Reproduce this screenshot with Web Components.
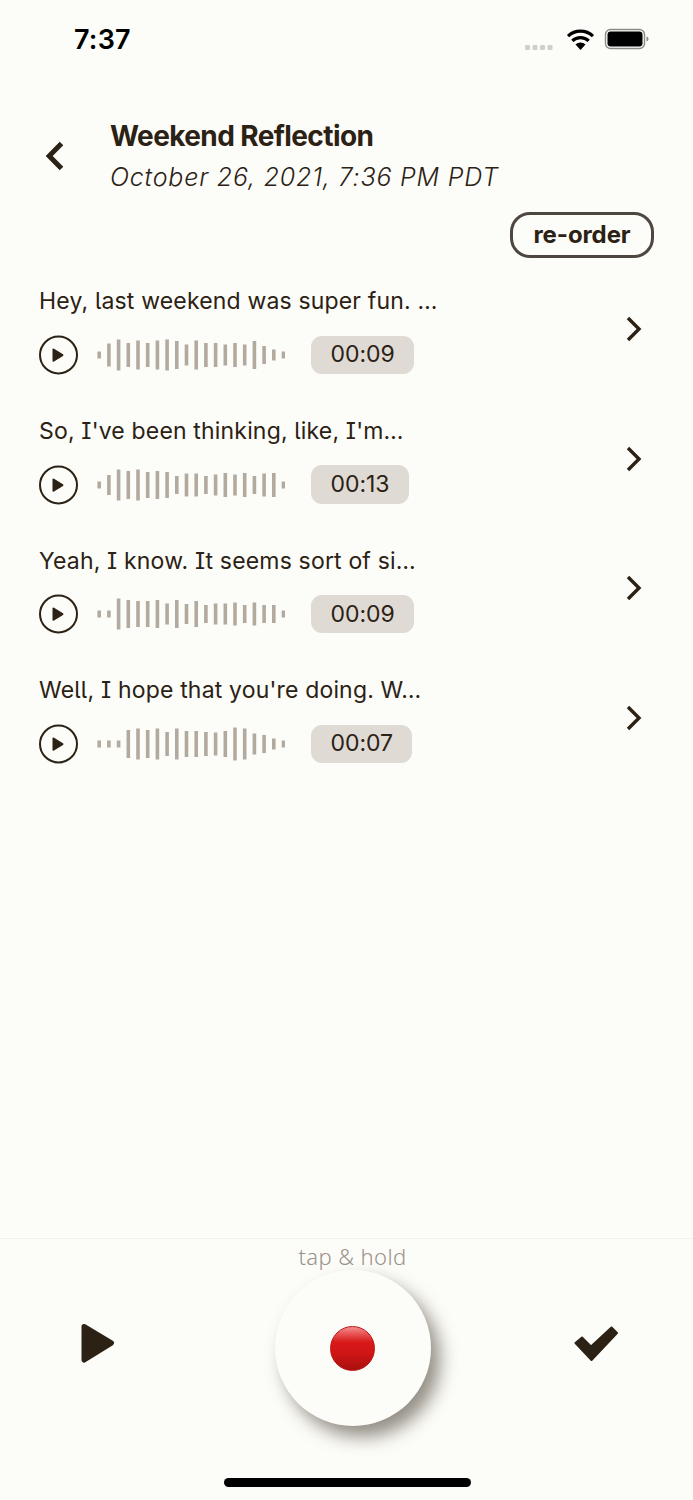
<!DOCTYPE html>
<html>
<head>
<meta charset="utf-8">
<style>
  html, body { margin: 0; padding: 0; background: #fcfcf8; }
  body { font-family: "Inter", "Liberation Sans", sans-serif; color: #2b2114; }
  app-screen { height: 1500px; }
</style>
</head>
<body>
<app-screen>
  <status-bar slot="status" time="7:37"></status-bar>
  <note-header slot="header" date="October 26, 2021, 7:36 PM PDT">Weekend Reflection</note-header>
  <clip-row time="00:09" bars="7,23,31,24,29,24,29,31,28,21,29,24,24,21,24,21,28,18,11,7">Hey, last weekend was super fun. …</clip-row>
  <clip-row time="00:13" bars="7,20,31,28,31,26,28,26,18,23,23,18,21,24,21,24,18,23,24,7">So, I've been thinking, like, I'm…</clip-row>
  <clip-row time="00:09" bars="7,7,31,28,26,26,28,21,28,20,26,18,21,21,23,18,23,18,18,7">Yeah, I know. It seems sort of si…</clip-row>
  <clip-row time="00:07" bars="7,7,7,28,31,28,31,24,31,26,26,24,23,26,33,31,21,18,11,7">Well, I hope that you're doing. W…</clip-row>
  <record-footer slot="footer"></record-footer>
</app-screen>

<script>
class AppScreen extends HTMLElement {
  constructor() {
    super();
    this.attachShadow({ mode: "open" }).innerHTML = `
      <style>
        :host { display: flex; flex-direction: column; width: 693px; overflow: hidden; }
        .list { flex: 1; display: flex; flex-direction: column; padding-top: 8px; }
      </style>
      <slot name="status"></slot>
      <slot name="header"></slot>
      <div class="list"><slot></slot></div>
      <slot name="footer"></slot>
    `;
  }
}
customElements.define("app-screen", AppScreen);

class StatusBar extends HTMLElement {
  constructor() {
    super();
    this.attachShadow({ mode: "open" }).innerHTML = `
      <style>
        :host { display: flex; align-items: flex-start; justify-content: space-between; height: 80px; box-sizing: border-box; padding: 24px 43px 0 74px; }
        .time { font: 600 27px/31px "Inter", "Liberation Sans", sans-serif; color: #000; letter-spacing: 0.2px; }
        .icons { display: flex; align-items: flex-start; padding-top: 4px; }
        svg { display: block; }
      </style>
      <div class="time"></div>
      <div class="icons">
        <svg width="126" height="26" viewBox="0 0 126 26">
          <g fill="#cfcfcb">
            <rect x="1" y="17" width="5" height="5" rx="1.2"/><rect x="8.5" y="17" width="5" height="5" rx="1.2"/>
            <rect x="16" y="17" width="5" height="5" rx="1.2"/><rect x="23.5" y="17" width="5" height="5" rx="1.2"/>
          </g>
          <g fill="none" stroke="#000" stroke-width="3.2">
            <path d="M44 8.2a18 18 0 0 1 25 0"/>
            <path d="M48.3 12.8a12 12 0 0 1 16.4 0"/>
          </g>
          <path d="M51.5 16.6a7 7 0 0 1 10 0L56.5 22z" fill="#000"/>
          <rect x="81.5" y="1.5" width="39" height="19" rx="5" fill="none" stroke="#8b8b88" stroke-width="1.4"/>
          <rect x="83.5" y="3.5" width="35" height="15" rx="3.2" fill="#000"/>
          <path d="M122.5 8.5c1.6.4 2 1.4 2 2.500s-.4 2.100-2 2.500z" fill="#8b8b88"/>
        </svg>
      </div>
    `;
    this.shadowRoot.querySelector(".time").textContent = this.getAttribute("time") || "";
  }
}
customElements.define("status-bar", StatusBar);

class NoteHeader extends HTMLElement {
  constructor() {
    super();
    this.attachShadow({ mode: "open" }).innerHTML = `
      <style>
        :host { display: block; padding: 39px 39px 0 45px; }
        .top { display: flex; align-items: flex-start; }
        .back { width: 65px; padding-top: 22px; flex: none; }
        svg { display: block; }
        h1 { margin: 0; font: 700 28px/34px "Inter", "Liberation Sans", sans-serif; letter-spacing: -0.6px; color: #2b2114; }
        .date { margin-top: 9px; font: italic 300 25px/30px "Inter", "Liberation Sans", sans-serif; letter-spacing: 0.81px; color: #2b2114; }
        .actions { display: flex; justify-content: flex-end; margin-top: 20px; }
        .pill { box-sizing: border-box; height: 46px; width: 144px; border: 3px solid #4d4740; border-radius: 20px; display: flex; align-items: center; justify-content: center; font: 700 24px/1 "Inter", "Liberation Sans", sans-serif; letter-spacing: -0.1px; color: #2b2114; }
      </style>
      <div class="top">
        <div class="back">
          <svg width="21" height="30" viewBox="0 0 21 30"><path d="M16.500 2.500 4.200 15l12.300 12.500" fill="none" stroke="#2b2114" stroke-width="5"/></svg>
        </div>
        <div>
          <h1><slot></slot></h1>
          <div class="date"></div>
        </div>
      </div>
      <div class="actions"><div class="pill">re-order</div></div>
    `;
    this.shadowRoot.querySelector(".date").textContent = this.getAttribute("date") || "";
  }
}
customElements.define("note-header", NoteHeader);

class WaveForm extends HTMLElement {
  static get observedAttributes() { return ["bars"]; }
  constructor() {
    super();
    this.attachShadow({ mode: "open" }).innerHTML = `
      <style>
        :host { display: block; width: 188px; height: 34px; }
        svg { display: block; }
      </style>
      <svg width="188" height="34" viewBox="0 0 188 34"></svg>
    `;
  }
  attributeChangedCallback() {
    const svg = this.shadowRoot.querySelector("svg");
    svg.innerHTML = "";
    (this.getAttribute("bars") || "").split(",").forEach((h, i) => {
      // bars are antialiased on purpose, they sit on a 9.7px pitch
      const bar = document.createElementNS("http://www.w3.org/2000/svg", "rect");
      bar.setAttribute("x", 0.4 + i * 9.7);
      bar.setAttribute("y", 17 - h / 2);
      bar.setAttribute("width", 3.6);
      bar.setAttribute("height", h);
      bar.setAttribute("fill", "#b3aa9f");
      svg.appendChild(bar);
    });
  }
}
customElements.define("wave-form", WaveForm);

class ClipRow extends HTMLElement {
  constructor() {
    super();
    this.attachShadow({ mode: "open" }).innerHTML = `
      <style>
        :host { display: flex; align-items: center; height: 129.700px; box-sizing: border-box; padding: 0 50px 0 39px; }
        .main { flex: 1; margin-top: -1px; }
        .text { font: 400 23px/30px "Inter", "Liberation Sans", sans-serif; font-feature-settings: "cv08", "cv05"; letter-spacing: 0.17px; color: #2b2114; margin-bottom: 19px; white-space: nowrap; }
        .player { display: flex; align-items: center; height: 39px; }
        .play { display: block; flex: none; margin-right: 18px; }
        .chip { margin-left: 26px; height: 38.500px; box-sizing: border-box; padding: 0 19.500px; display: flex; align-items: center; background: #dfdad4; border-radius: 11px; font: 400 23px/1 "Inter", "Liberation Sans", sans-serif; letter-spacing: -0.05px; color: #2b2114; }
        .arrow { display: block; flex: none; margin-top: -4px; }
      </style>
      <div class="main">
        <div class="text"><slot></slot></div>
        <div class="player">
          <svg class="play" width="40" height="40" viewBox="0 0 40 40">
            <circle cx="19.500" cy="20" r="18.500" fill="none" stroke="#2b2114" stroke-width="2"/>
            <path d="M13.500 14.500a1 1 0 0 1 1.500-.8l9 5.600a1 1 0 0 1 0 1.600l-9 5.600a1 1 0 0 1-1.500-.8z" fill="#2b2114"/>
          </svg>
          <wave-form></wave-form>
          <div class="chip"></div>
        </div>
      </div>
      <svg class="arrow" width="18" height="26" viewBox="0 0 18 26"><path d="M3 2l11 11L3 24" fill="none" stroke="#2b2114" stroke-width="3.400"/></svg>
    `;
    this.shadowRoot.querySelector(".chip").textContent = this.getAttribute("time") || "";
    this.shadowRoot.querySelector("wave-form").setAttribute("bars", this.getAttribute("bars") || "");
  }
}
customElements.define("clip-row", ClipRow);

class RecordFooter extends HTMLElement {
  constructor() {
    super();
    this.attachShadow({ mode: "open" }).innerHTML = `
      <style>
        :host { display: block; position: relative; border-top: 1px solid #f1f1ed; height: 262px; box-sizing: border-box; }
        .hint { text-align: center; padding-left: 12px; margin-top: 3px; font: 300 22px/28px "Noto Sans", "DejaVu Sans", sans-serif; letter-spacing: 0.4px; color: #9a9389; }
        .controls { display: grid; grid-template-columns: 275px 156px 1fr; align-items: center; height: 156px; }
        svg { display: block; }
        .record { width: 156px; height: 156px; border-radius: 50%; background: #fcfcf8; box-shadow: 9px 11px 17px rgba(85, 78, 65, 0.62); display: flex; align-items: center; justify-content: center; position: relative; }
        .dot { width: 45px; height: 45px; margin-left: -1px; border-radius: 50%; box-sizing: border-box; border: 1px solid #c21414; background: linear-gradient(#f29090 0%, #ea5a5a 14%, #d81818 36%, #cf1515 62%, #a81010 100%); }
        .play { margin: -11px 0 0 81px; }
        .check { margin: -10px 0 0 142px; }
        .home { position: absolute; left: 224px; top: 239px; width: 247px; height: 9px; background: #000; border-radius: 5px; }
      </style>
      <div class="hint">tap &amp; hold</div>
      <div class="controls">
        <svg class="play" width="34" height="40" viewBox="0 0 34 40"><path d="M3 3.500 30.500 20 3 37z" fill="#2b2114" stroke="#2b2114" stroke-width="5" stroke-linejoin="round"/></svg>
        <div class="record"><div class="dot"></div></div>
        <svg class="check" width="46" height="36" viewBox="0 0 46 36"><path d="M2.500 18 9 12.500 18 21.500 38.500 2.500 44 8 18.500 35z" fill="#2b2114" stroke="#2b2114" stroke-width="2" stroke-linejoin="round"/></svg>
      </div>
      <div class="home"></div>
    `;
  }
}
customElements.define("record-footer", RecordFooter);
</script>
</body>
</html>
